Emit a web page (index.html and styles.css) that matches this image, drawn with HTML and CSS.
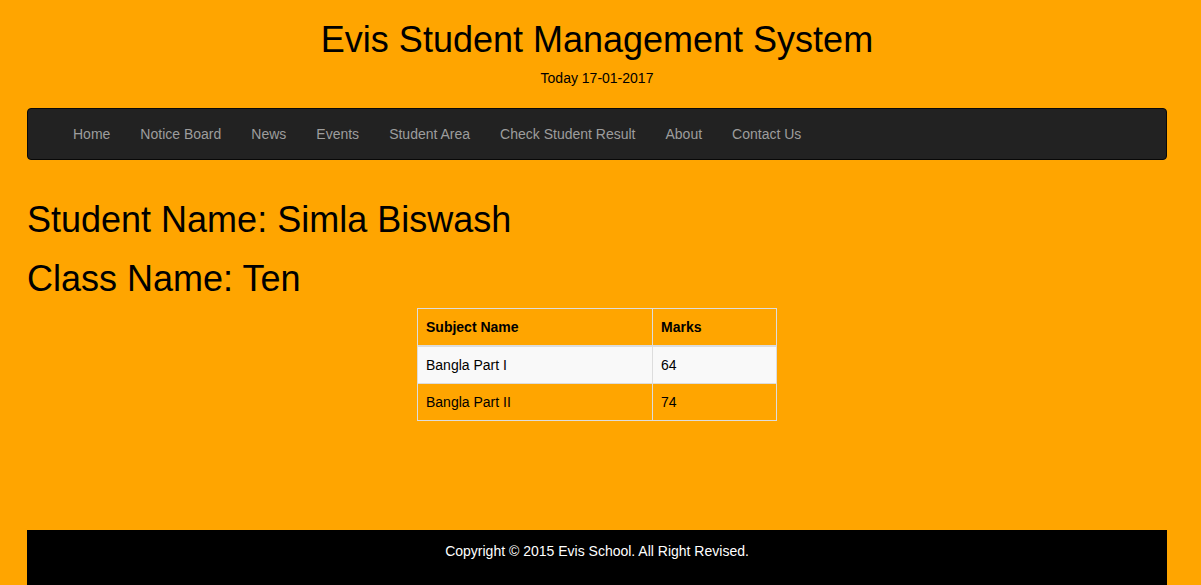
FILE: index.html
```html
<!DOCTYPE html>
<html lang="en">
<head>
<meta charset="utf-8">
<title>Evis Student Management System</title>
<link rel="stylesheet" href="styles.css">
</head>
<body>
<div class="container">
  <header class="site-header">
    <h1 class="site-title">Evis Student Management System</h1>
    <p class="today">Today 17-01-2017</p>
  </header>
  <nav class="navbar">
    <ul class="nav">
      <li><a href="#">Home</a></li>
      <li><a href="#">Notice Board</a></li>
      <li><a href="#">News</a></li>
      <li><a href="#">Events</a></li>
      <li><a href="#">Student Area</a></li>
      <li><a href="#">Check Student Result</a></li>
      <li><a href="#">About</a></li>
      <li><a href="#">Contact Us</a></li>
    </ul>
  </nav>
  <main class="content">
    <h1 class="heading">Student Name: Simla Biswash</h1>
    <h1 class="heading">Class Name: Ten</h1>
    <table class="result">
      <thead>
        <tr><th class="col-subject">Subject Name</th><th>Marks</th></tr>
      </thead>
      <tbody>
        <tr class="odd"><td>Bangla Part I</td><td>64</td></tr>
        <tr><td>Bangla Part II</td><td>74</td></tr>
      </tbody>
    </table>
  </main>
  <footer class="footer">
    <p>Copyright © 2015 Evis School. All Right Revised.</p>
  </footer>
</div>
</body>
</html>
```
FILE: styles.css
```css
* { box-sizing: border-box; }
html, body {
  margin: 0;
  padding: 0;
}
body {
  background: #ffa500;
  font-family: "Liberation Sans", Arial, Helvetica, sans-serif;
  font-size: 14px;
  line-height: 1.42857;
  color: #000;
}
.container {
  width: 1170px;
  margin: 0 0 0 12px;
  padding: 0 15px;
}
.site-header {
  text-align: center;
  padding-bottom: 9px;
}
.site-title {
  font-size: 36px;
  font-weight: 500;
  line-height: 1.1;
  margin: 20px 0 9px;
}
.today {
  margin: 0 0 10px;
}
.navbar {
  background: #222;
  border: 1px solid #080808;
  border-radius: 4px;
  min-height: 52px;
  margin-bottom: 20px;
  padding: 0 30px;
}
.nav {
  list-style: none;
  margin: 0;
  padding: 0;
  display: flex;
}
.nav a {
  display: block;
  padding: 15px;
  line-height: 20px;
  color: #9d9d9d;
  text-decoration: none;
}
.content {
  padding-top: 20px;
  padding-bottom: 89px;
}
.heading {
  font-size: 36px;
  font-weight: 500;
  line-height: 1.1;
  margin: 0 0 20px;
}
.heading + .heading {
  margin-bottom: 9px;
}
.result {
  border-collapse: collapse;
  margin: 0 auto 20px;
  width: 360px;
  border: 1px solid #ddd;
}
.result th, .result td {
  border: 1px solid #ddd;
  padding: 8px;
  line-height: 20px;
  text-align: left;
  vertical-align: top;
}
.result th {
  border-bottom-width: 2px;
  font-weight: bold;
}
.col-subject { width: 235px; }
.result tr.odd { background: #f9f9f9; }
.footer {
  background: #000;
  color: #fff;
  text-align: center;
  padding: 12px 0 20px;
  min-height: 60px;
}
.footer p { margin: 0; }
```
